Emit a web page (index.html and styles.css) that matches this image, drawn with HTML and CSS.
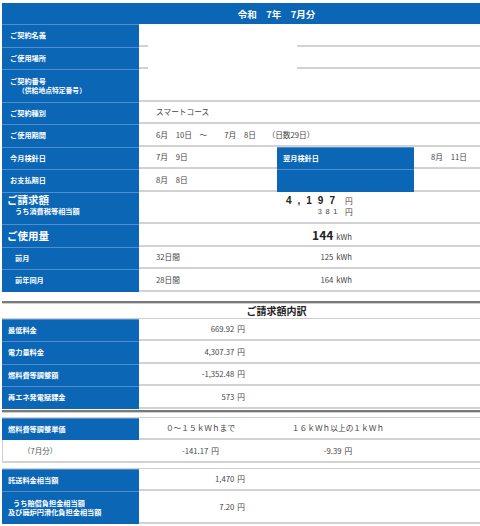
FILE: index.html
```html
<!DOCTYPE html>
<html lang="ja">
<head>
<meta charset="utf-8">
<title>ご請求明細</title>
<link rel="stylesheet" href="styles.css">
</head>
<body>
<div class="sheet">
  <div class="grid">
    <div class="title">令和　7年　7月分</div>

    <div class="lbl">ご契約名義</div>
    <div class="val span3 masked"><span class="stub"></span><span class="blank"></span><span class="rest"></span></div>

    <div class="lbl">ご使用場所</div>
    <div class="val span3 masked"><span class="stub"></span><span class="blank"></span><span class="rest"></span></div>

    <div class="lbl tall">ご契約番号<span class="sub2">（供給地点特定番号）</span></div>
    <div class="val span3"></div>

    <div class="lbl">ご契約種別</div>
    <div class="val span3">スマートコース</div>

    <div class="lbl">ご使用期間</div>
    <div class="val span3 pre">6月　10日　～　　 7月　8日　　（日数29日）</div>

    <div class="lbl">今月検針日</div>
    <div class="val pre">7月　9日</div>
    <div class="lbl mid">翌月検針日</div>
    <div class="val pre">8月　11日</div>

    <div class="lbl">お支払期日</div>
    <div class="val pre">8月　8日</div>
    <div class="lbl mid"></div>
    <div class="val"></div>

    <div class="lbl tall bill"><span class="big">ご請求額</span><span class="sub1">うち消費税等相当額</span></div>
    <div class="val span3 amount">
      <div class="amt-line"><span class="amt-num big-num">4,197</span><span class="yen">円</span></div>
      <div class="amt-line"><span class="amt-num small-num">381</span><span class="yen">円</span></div>
    </div>

    <div class="lbl"><span class="big">ご使用量</span></div>
    <div class="val span3 nopad"><span class="usage"><b class="kwh-num">144</b><span class="unit">kWh</span></span></div>

    <div class="lbl"><span class="sub1">前月</span></div>
    <div class="val span3"><span class="days">32日間</span><span class="kwh">125<span class="unit">kWh</span></span></div>

    <div class="lbl"><span class="sub1">前年同月</span></div>
    <div class="val span3"><span class="days">28日間</span><span class="kwh">164<span class="unit">kWh</span></span></div>
  </div>

  <div class="rule first-rule"></div>

  <div class="grid">
    <div class="section-head">ご請求額内訳</div>

    <div class="lbl lbl-b">最低料金</div>
    <div class="val span3 nopad"><span class="money">669.92<span class="unit">円</span></span></div>

    <div class="lbl lbl-b">電力量料金</div>
    <div class="val span3 nopad"><span class="money">4,307.37<span class="unit">円</span></span></div>

    <div class="lbl lbl-b">燃料費等調整額</div>
    <div class="val span3 nopad"><span class="money">-1,352.48<span class="unit">円</span></span></div>

    <div class="lbl lbl-b">再エネ発電賦課金</div>
    <div class="val span3 nopad"><span class="money">573<span class="unit">円</span></span></div>
  </div>

  <div class="rule second-rule"></div>

  <div class="grid boxed">
    <div class="lbl lbl-b">燃料費等調整単価</div>
    <div class="val center">０～１５ｋＷｈまで</div>
    <div class="val center">１６ｋＷｈ以上の１ｋＷｈ</div>
    <div class="val"></div>

    <div class="lbl plain">（7月分）</div>
    <div class="val center">-141.17<span class="unit">円</span></div>
    <div class="val center">-9.39<span class="unit">円</span></div>
    <div class="val"></div>
  </div>

  <div class="grid boxed last">
    <div class="lbl lbl-b">託送料金相当額</div>
    <div class="val span3 nopad"><span class="money">1,470<span class="unit">円</span></span></div>

    <div class="lbl lbl-b tall"><span class="indent">うち賠償負担金相当額</span><span>及び廃炉円滑化負担金相当額</span></div>
    <div class="val span3 nopad"><span class="money">7.20<span class="unit">円</span></span></div>
  </div>
</div>
</body>
</html>
```

FILE: styles.css
```css
* { box-sizing: border-box; }

html, body {
  margin: 0;
  overflow: hidden;
  background: #ffffff;
}

body {
  padding: 3px 0 0 2px;
  font-family: "Noto Sans CJK JP", "Noto Sans", sans-serif;
  font-size: 7.7px;
  color: #333333;
}

.sheet {
  width: 549px;
}

.grid {
  display: grid;
  grid-template-columns: 137px 138px 137px 137px;
}

.title {
  grid-column: span 4;
  height: 21px;
  background: #0b66b5;
  color: #ffffff;
  font-weight: bold;
  font-size: 9.5px;
  display: flex;
  align-items: center;
  justify-content: center;
  white-space: pre;
}

.lbl {
  height: 22.5px;
  background: #0b66b5;
  color: #ffffff;
  font-weight: bold;
  font-size: 7.2px;
  padding-left: 8px;
  display: flex;
  flex-direction: column;
  justify-content: center;
  border-top: 1px solid #4f8fd0;
  line-height: 1.25;
}

.lbl.tall {
  height: 32.5px;
}

.lbl.bill {
  justify-content: flex-start;
  padding-top: 1px;
}

.lbl.mid {
  padding-left: 6px;
}

.lbl-b {
  padding-left: 6px;
}

.lbl.plain {
  background: #ffffff;
  color: #555555;
  font-weight: normal;
  font-size: 7.5px;
  border-top: none;
  border-left: 1px solid #cfcfcf;
  border-bottom: 2px solid #d2d2d2;
  padding-left: 20px;
}

.big {
  font-size: 10.5px;
  margin-left: -3px;
  line-height: 12px;
}

.bill .sub1 {
  margin-top: 1px;
  line-height: 9px;
}

.sub1 {
  padding-left: 5px;
}

.sub2 {
  padding-left: 8px;
  font-size: 6.8px;
}

.indent {
  padding-left: 5px;
}

.val {
  display: flex;
  align-items: center;
  padding-left: 17px;
  border-bottom: 2px solid #d2d2d2;
  color: #444444;
}

.pre {
  white-space: pre;
}

.span3 {
  grid-column: span 3;
}

.nopad {
  padding-left: 0;
}

.masked {
  padding-left: 0;
  border-bottom: none;
  align-items: stretch;
}

.masked .stub {
  width: 9px;
  border-bottom: 2px solid #d2d2d2;
}

.masked .blank {
  width: 149px;
}

.masked .rest {
  flex: 1;
  border-bottom: 2px solid #d2d2d2;
}

.amount {
  flex-direction: column;
  align-items: flex-start;
  justify-content: flex-start;
  padding: 3px 0 0 0;
}

.amt-line {
  display: flex;
  align-items: center;
  height: 11px;
  line-height: 11px;
}

.amt-num {
  width: 202px;
  text-align: right;
  color: #222222;
  font-family: "Liberation Sans", Arial, sans-serif;
}

.big-num {
  font-size: 10px;
  font-weight: bold;
  letter-spacing: 6px;
}

.small-num {
  font-size: 7.4px;
  letter-spacing: 3.6px;
  color: #444444;
}

.yen {
  margin-left: 4px;
  font-size: 7.7px;
}

.unit {
  margin-left: 3px;
}

.usage {
  width: 213px;
  text-align: right;
}

.kwh-num {
  font-size: 12px;
  color: #222222;
}

.days {
  width: 121px;
}

.kwh {
  width: 75px;
  text-align: right;
}

.rule {
  height: 3px;
  border-top: 2px solid #7a7a7a;
  border-bottom: 1px solid #cfcfcf;
}

.first-rule {
  margin-top: 9px;
}

.second-rule {
  margin-top: 1px;
}

.section-head {
  grid-column: span 4;
  height: 15px;
  display: flex;
  align-items: center;
  justify-content: center;
  font-weight: bold;
  font-size: 10px;
  color: #222222;
  border-bottom: 1px solid #cfcfcf;
}

.money {
  width: 106px;
  text-align: right;
}

.boxed {
  margin-top: 4px;
  border-top: 1px solid #cfcfcf;
}

.last {
  margin-top: 5px;
}

.center {
  justify-content: center;
  padding-left: 0;
  padding-right: 15px;
}
```
